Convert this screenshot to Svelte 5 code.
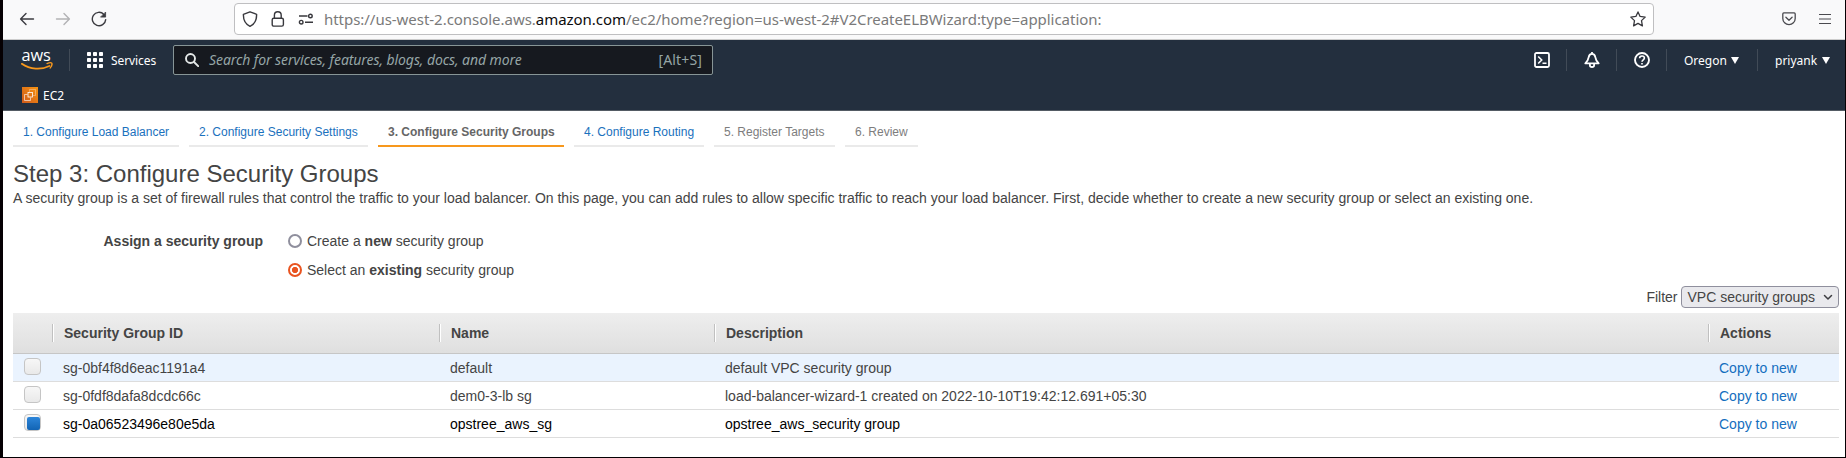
<script>
  const steps = [
    { label: '1. Configure Load Balancer', state: 'link', width: 166 },
    { label: '2. Configure Security Settings', state: 'link', width: 179 },
    { label: '3. Configure Security Groups', state: 'active', width: 186 },
    { label: '4. Configure Routing', state: 'link', width: 130 },
    { label: '5. Register Targets', state: 'todo', width: 121 },
    { label: '6. Review', state: 'todo', width: 73 }
  ];

  const columns = ['Security Group ID', 'Name', 'Description', 'Actions'];

  const groups = [
    { id: 'sg-0bf4f8d6eac1191a4', name: 'default', description: 'default VPC security group', hover: true },
    { id: 'sg-0fdf8dafa8dcdc66c', name: 'dem0-3-lb sg', description: 'load-balancer-wizard-1 created on 2022-10-10T19:42:12.691+05:30' },
    { id: 'sg-0a06523496e80e5da', name: 'opstree_aws_sg', description: 'opstree_aws_security group', selected: true }
  ];
</script>

<div class="window">
  <div class="toolbar">
    <div class="history">
      <svg width="16" height="16" viewBox="0 0 16 16" fill="none" stroke="#3b3b40" stroke-width="1.4" stroke-linecap="round" stroke-linejoin="round"><path d="M14.500 8H1.800M7 2.600 1.600 8 7 13.400" /></svg>
      <svg width="16" height="16" viewBox="0 0 16 16" fill="none" stroke="#b2b2b4" stroke-width="1.4" stroke-linecap="round" stroke-linejoin="round"><path d="M1.500 8h12.700M9 2.600 14.400 8 9 13.400" /></svg>
      <svg width="16" height="16" viewBox="0 0 16 16" fill="none" stroke="#3b3b40" stroke-width="1.4" stroke-linecap="round"><path d="M12.900 3.400A6.700 6.700 0 1 0 14.700 8.600" /><path d="M14.600 1.400v4.700H9.900z" fill="#3b3b40" stroke-width=".8" stroke-linejoin="round" /></svg>
    </div>
    <div class="address">
      <svg class="shield" width="16" height="16" viewBox="0 0 16 16" fill="none" stroke="#38383d" stroke-width="1.4" stroke-linejoin="round"><path d="M8 .8 14.600 3.300C14.800 9 12.400 13.200 8 15.300 3.600 13.200 1.200 9 1.400 3.300z" /></svg>
      <svg class="lock" width="14" height="16" viewBox="0 0 14 16" fill="none" stroke="#38383d" stroke-width="1.4"><rect x="1.2" y="7.2" width="11.2" height="7.9" rx="1.6" /><path d="M3.400 7V4.200a3.400 3.400 0 0 1 6.800 0V7" /></svg>
      <svg class="perm" width="16" height="12" viewBox="0 0 16 12" fill="none" stroke="#38383d" stroke-width="1.4"><path d="M1 3h8.500M7 9.200h8" /><circle cx="12.4" cy="3" r="1.8" /><circle cx="3.2" cy="9.2" r="1.8" /></svg>
      <span class="url">https://us-west-2.console.aws.<b>amazon.com</b>/ec2/home?region=us-west-2#V2CreateELBWizard:type=application:</span>
      <svg class="star" width="16" height="16" viewBox="0 0 16 16" fill="none" stroke="#38383d" stroke-width="1.3" stroke-linejoin="round"><path d="M8 .9 10.100 5.400 15.200 6.100 11.500 9.600 12.400 14.900 8 12.400 3.600 14.900 4.500 9.600.8 6.100 5.900 5.400z" /></svg>
    </div>
    <svg class="pocket" width="14" height="14" viewBox="0 0 14 14" fill="none" stroke="#4a4a4f" stroke-width="1.3" stroke-linecap="round" stroke-linejoin="round"><path d="M1.800.9h10.400q1 0 1 1v4.500a6.200 6.200 0 0 1-12.400 0V1.900q0-1 1-1z" /><path d="M3.900 5.300 7 8.200l3.100-2.900" /></svg>
    <svg class="burger" width="12" height="12" viewBox="0 0 12 12" stroke="#4a4a4f" stroke-width="1.2"><path d="M0 1.500h12M0 6h12M0 10.500h12" /></svg>
  </div>

  <header>
    <div class="navrow">
      <svg class="aws" width="32" height="26" viewBox="0 -6 32 26">
        <text x=".4" y="10.8" textLength="29.5" lengthAdjust="spacingAndGlyphs">aws</text>
        <path d="M.8 13.800C9 19.600 20.500 20 28.400 16" fill="none" stroke="#f7981d" stroke-width="1.7" stroke-linecap="round" />
        <path d="M26 13.600c2-.8 4.300-.9 4.800-.4.400.6-.2 3.100-1.700 4.900" fill="none" stroke="#f7981d" stroke-width="1.3" stroke-linecap="round" />
      </svg>
      <i class="divider d1"></i>
      <svg class="grid" width="16" height="16" viewBox="0 0 16 16" fill="#fff">
        {#each [0, 6, 12] as y}{#each [0, 6, 12] as x}<rect {x} {y} width="4" height="4" rx=".8" />{/each}{/each}
      </svg>
      <span class="services">Services</span>
      <div class="search">
        <svg width="14" height="14" viewBox="0 0 14 14" fill="none" stroke="#e4e8e8" stroke-width="1.9" stroke-linecap="round"><circle cx="5.5" cy="5.5" r="4.5" /><path d="m9 9 4.200 4.200" /></svg>
        <span class="placeholder">Search for services, features, blogs, docs, and more</span>
        <span class="shortcut">[Alt+S]</span>
      </div>
      <div class="tools">
        <svg width="16" height="16" viewBox="0 0 16 16" fill="none" stroke="#fff" stroke-width="1.8"><rect x="1" y="1" width="14" height="14" rx="1.5" /><path d="m4.200 4.500 3.500 3.500-3.500 3.500M8.500 11.300h4" stroke-width="1.6" /></svg>
        <i class="divider"></i>
        <svg width="16" height="16" viewBox="0 0 16 16" fill="none" stroke="#fff" stroke-width="1.8" stroke-linejoin="round"><path d="M8 0v2M8 1.800c-1.900 0-3 1.500-3.300 3.400C4.300 8 3.300 9.500 1.300 11.300h13.400C12.700 9.500 11.700 8 11.300 5.200 11 3.300 9.900 1.800 8 1.800z" /><path d="M5.900 12v1.200a2.100 1.800 0 0 0 4.200 0V12" /></svg>
        <i class="divider"></i>
        <svg width="16" height="16" viewBox="0 0 16 16" fill="none" stroke="#fff" stroke-width="1.9"><circle cx="8" cy="8" r="7" /><path d="M5.600 6.300C5.600 4.800 6.700 4 8 4s2.400.8 2.400 2.100C10.400 7.800 8 7.800 8 9.700M8 10.900v1.600" stroke-width="1.600" /></svg>
        <i class="divider"></i>
        <span class="region">Oregon</span>
        <svg class="caret" width="8" height="7" viewBox="0 0 8 7" fill="#fff"><path d="M0 0h8L4 7z" /></svg>
        <i class="divider d5"></i>
        <span class="user">priyank</span>
        <svg class="caret" width="8" height="7" viewBox="0 0 8 7" fill="#fff"><path d="M0 0h8L4 7z" /></svg>
      </div>
    </div>
    <div class="favorites">
      <svg width="16" height="16" viewBox="0 0 16 16">
        <defs><linearGradient id="ec2" x1="0" y1="1" x2="1" y2="0"><stop offset="0" stop-color="#cf5a1b" /><stop offset="1" stop-color="#f79411" /></linearGradient></defs>
        <rect width="16" height="16" fill="url(#ec2)" />
        <g fill="none" stroke="#fff" stroke-width=".8"><rect x="6" y="5.500" width="4.500" height="4.500" /><path d="M5.500 7.500H2.500v6h6v-3" stroke-opacity=".75" /><path d="M7.500 5V2.500h6v6H11" stroke-opacity=".4" /></g>
      </svg>
      <span>EC2</span>
    </div>
  </header>

  <main>
    <nav>
      {#each steps as step}
        <div class="step {step.state}" style="width: {step.width}px">{step.label}</div>
      {/each}
    </nav>
    <h1>Step 3: Configure Security Groups</h1>
    <p>A security group is a set of firewall rules that control the traffic to your load balancer. On this page, you can add rules to allow specific traffic to reach your load balancer. First, decide whether to create a new security group or select an existing one.</p>

    <div class="assign">
      <div class="label">Assign a security group</div>
      <div class="options">
        <div class="option"><span class="radio"></span><span>Create a <b>new</b> security group</span></div>
        <div class="option"><span class="radio on"></span><span>Select an <b>existing</b> security group</span></div>
      </div>
    </div>

    <div class="filter">
      <span>Filter</span>
      <div class="select">
        <span>VPC security groups</span>
        <svg width="10" height="7" viewBox="0 0 10 7" fill="none" stroke="#3c3c41" stroke-width="1.500" stroke-linecap="round" stroke-linejoin="round"><path d="M1.500 1.500 5 5l3.500-3.500" /></svg>
      </div>
    </div>

    <div class="table">
      <div class="row head">
        <div></div>
        {#each columns as column}<div class="th">{column}</div>{/each}
      </div>
      {#each groups as group}
        <div class="row body" class:hover={group.hover} class:selected={group.selected}>
          <div class="pick"><span class="box"></span></div>
          <div>{group.id}</div>
          <div>{group.name}</div>
          <div>{group.description}</div>
          <div class="copy">Copy to new</div>
        </div>
      {/each}
    </div>
  </main>
</div>

<style>
  :global(body) { margin: 0; overflow: hidden; }
  .window {
    box-sizing: border-box;
    width: 1846px;
    height: 458px;
    border: solid #050003;
    border-width: 0 1px 1px 3px;
    background: #fff;
    overflow: hidden;
    font: 14px/16px "Liberation Sans", Arial, sans-serif;
    color: #444;
    white-space: nowrap;
  }
  svg { display: block; flex: none; }

  .toolbar {
    box-sizing: border-box;
    height: 40px;
    display: flex;
    align-items: center;
    background: #f9f9fa;
    border-bottom: 1px solid #ccc;
    padding-bottom: 1px;
  }
  .history { box-sizing: border-box; display: flex; gap: 20px; width: 231px; padding-left: 16px; }
  .address {
    box-sizing: border-box;
    width: 1420px;
    height: 32px;
    display: flex;
    align-items: center;
    border: 1px solid #bfbfc1;
    border-radius: 4px;
    background: #fff;
    padding-left: 7px;
  }
  .lock { margin-left: 13px; }
  .perm { margin-left: 13px; }
  .url {
    margin-left: 10px;
    font: 15px/20px "Noto Sans", sans-serif;
    color: #7a7a7a;
    letter-spacing: -0.035px;
  }
  .url b { font-weight: 400; color: #0c0c0d; }
  .star { margin: 0 7px 0 auto; }
  .pocket { margin-left: 128px; }
  .burger { margin-left: 23px; }

  header {
    box-sizing: border-box;
    height: 71px;
    background: #232f3e;
    border-bottom: 1px solid #545b64;
    font: 12px/16px "Noto Sans", sans-serif;
    color: #fff;
  }
  .navrow { height: 40px; display: flex; align-items: center; }
  .aws { margin: 0 0 6px 18px; }
  .aws text { font: 500 17px "Open Sans", sans-serif; fill: #fff; }
  .divider { width: 1px; height: 22px; background: #414b57; }
  .d1 { margin-left: 16px; }
  .grid { margin-left: 17px; }
  .services { box-sizing: border-box; width: 62px; margin-left: 8px; padding-top: 1px; letter-spacing: -0.08px; }
  .search {
    box-sizing: border-box;
    width: 540px;
    height: 30px;
    display: flex;
    align-items: center;
    border: 1px solid #879596;
    border-radius: 2px;
    background: #16191f;
    padding: 0 10px 0 11px;
    font-size: 14px;
    color: #95a5a6;
  }
  .placeholder { margin-left: 10px; font-style: italic; letter-spacing: -0.08px; }
  .shortcut { margin-left: auto; letter-spacing: 0.15px; }
  .tools { width: 311px; margin-left: auto; display: flex; align-items: center; }
  .tools .divider { margin: 0 17px 0 16px; }
  .tools .d5 { margin-left: 18px; }
  .region { width: 47px; padding-top: 1px; }
  .user { width: 47px; padding-top: 1px; }
  .favorites { display: flex; align-items: center; gap: 5px; height: 30px; padding-left: 19px; }
  .favorites span { padding-top: 2px; }

  main { padding: 14px 6px 0 10px; }
  nav { display: flex; gap: 10px; font-size: 12px; line-height: 14px; }
  .step {
    box-sizing: border-box;
    height: 22px;
    padding: 0 10px;
    border-bottom: 2px solid #eaeaea;
    color: #1a71bd;
  }
  .todo { color: #7d7d7d; }
  .active { color: #666; font-weight: 700; border-color: #f7981d; }
  h1 { margin: 13px 0 0; font-size: 24px; line-height: 27px; font-weight: 400; }
  p { margin: 3px 0 0; }
  .assign { display: flex; margin-top: 27px; }
  .label { box-sizing: border-box; width: 275px; padding-left: 90.500px; font-weight: 700; }
  .options { display: flex; flex-direction: column; gap: 13px; }
  .option { display: flex; align-items: center; gap: 5px; }
  .radio {
    box-sizing: border-box;
    width: 14px;
    height: 14px;
    border: 2px solid #8f8f9d;
    border-radius: 50%;
    background: #fff;
  }
  .radio.on { border-color: #e95420; background: radial-gradient(circle, #e95420 2.800px, #fff 3.400px); }
  .filter { display: flex; justify-content: flex-end; align-items: center; gap: 3.500px; margin-top: 8px; }
  .select {
    box-sizing: border-box;
    width: 158px;
    height: 22px;
    display: flex;
    align-items: center;
    justify-content: space-between;
    padding: 0 5px 0 5.500px;
    border: 1px solid #8f8f9d;
    border-radius: 4px;
    background: #e9e9ed;
  }
  .table { margin-top: 5px; }
  .row { display: grid; grid-template-columns: 40px 387px 275px 994px 1fr; }
  .head {
    height: 40px;
    align-items: center;
    background: linear-gradient(#eee, #dfdfdf);
    border-bottom: 1px solid #c6c6c6;
    font-weight: 700;
  }
  .th {
    height: 18px;
    line-height: 18px;
    margin-left: -1px;
    padding-left: 11px;
    border-left: 1px solid #c0c0c0;
    box-shadow: inset 1px 0 #fff;
  }
  .body { box-sizing: border-box; height: 28px; border-bottom: 1px solid #ddd; line-height: 26px; }
  .body > div { padding: 1px 0 0 10px; }
  .body > .pick { padding: 4px 0 0 11px; }
  .hover { background: #eaf3fe; }
  .selected { color: #000; }
  .body > .copy { color: #146ebe; }
  .box {
    box-sizing: border-box;
    display: block;
    width: 17px;
    height: 17px;
    border: 1px solid #c5c5c5;
    border-radius: 4px;
    background: linear-gradient(#f7f7f7, #e9e9e9);
    padding: 2px 0 0 2px;
  }
  .selected .box::before {
    content: "";
    display: block;
    width: 13px;
    height: 13px;
    border-radius: 2px;
    background: linear-gradient(#2d86da, #1264b4);
  }
</style>
